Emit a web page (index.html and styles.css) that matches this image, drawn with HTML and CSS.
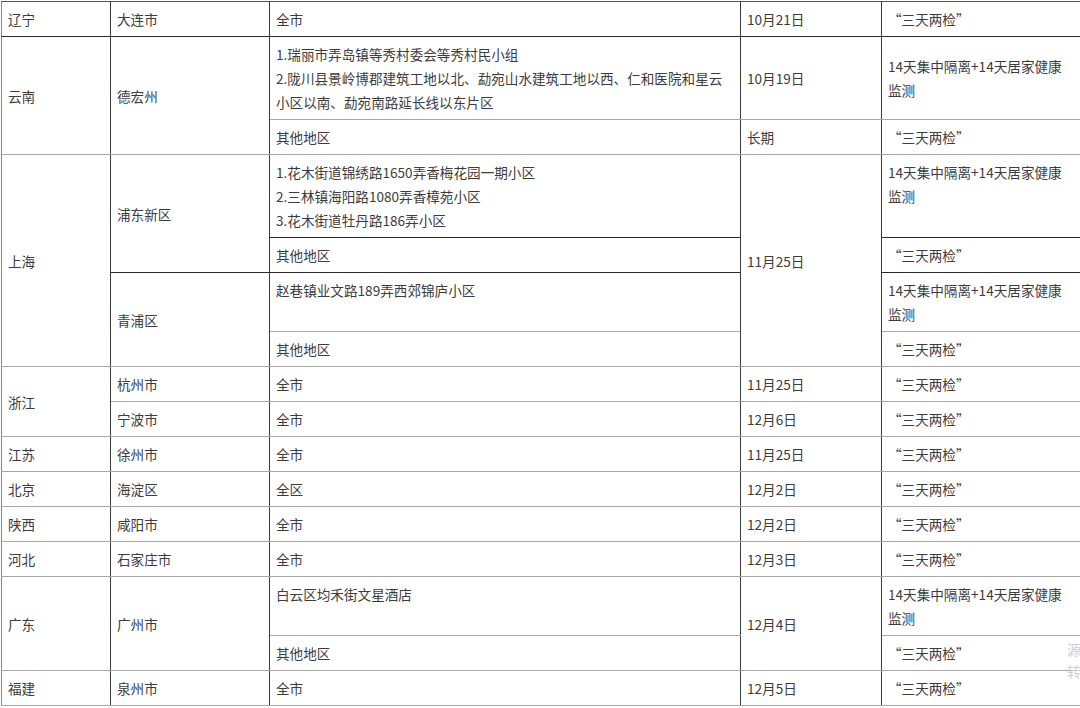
FILE: index.html
```html
<!DOCTYPE html>
<html lang="zh-CN">
<head>
<meta charset="utf-8">
<link rel="stylesheet" href="styles.css">
</head>
<body>
<table class="grid">
  <colgroup>
    <col class="c1"><col class="c2"><col class="c3"><col class="c4"><col class="c5">
  </colgroup>
  <tbody>
    <tr class="dark-b">
      <td>辽宁</td><td>大连市</td><td>全市</td><td>10月21日</td><td class="q">“三天两检”</td>
    </tr>
    <tr>
      <td rowspan="2">云南</td><td rowspan="2">德宏州</td>
      <td class="top">1.瑞丽市弄岛镇等秀村委会等秀村民小组<br>2.陇川县景岭博郡建筑工地以北、勐宛山水建筑工地以西、仁和医院和星云小区以南、勐宛南路延长线以东片区</td>
      <td>10月19日</td><td class="m">14天集中隔离+14天居家健康监测</td>
    </tr>
    <tr>
      <td>其他地区</td><td>长期</td><td class="q">“三天两检”</td>
    </tr>
    <tr>
      <td rowspan="4">上海</td><td rowspan="2" class="dark-b">浦东新区</td>
      <td class="top dark-b">1.花木街道锦绣路1650弄香梅花园一期小区<br>2.三林镇海阳路1080弄香樟苑小区<br>3.花木街道牡丹路186弄小区</td>
      <td rowspan="4">11月25日</td><td class="m top dark-b">14天集中隔离+14天居家健康监测</td>
    </tr>
    <tr class="dark-b">
      <td>其他地区</td><td class="q">“三天两检”</td>
    </tr>
    <tr>
      <td rowspan="2">青浦区</td>
      <td class="top">赵巷镇业文路189弄西郊锦庐小区</td>
      <td class="m top">14天集中隔离+14天居家健康监测</td>
    </tr>
    <tr>
      <td>其他地区</td><td class="q">“三天两检”</td>
    </tr>
    <tr>
      <td rowspan="2">浙江</td><td>杭州市</td><td>全市</td><td>11月25日</td><td class="q">“三天两检”</td>
    </tr>
    <tr>
      <td>宁波市</td><td>全市</td><td>12月6日</td><td class="q">“三天两检”</td>
    </tr>
    <tr>
      <td>江苏</td><td>徐州市</td><td>全市</td><td>11月25日</td><td class="q">“三天两检”</td>
    </tr>
    <tr>
      <td>北京</td><td>海淀区</td><td>全区</td><td>12月2日</td><td class="q">“三天两检”</td>
    </tr>
    <tr>
      <td>陕西</td><td>咸阳市</td><td>全市</td><td>12月2日</td><td class="q">“三天两检”</td>
    </tr>
    <tr>
      <td>河北</td><td>石家庄市</td><td>全市</td><td>12月3日</td><td class="q">“三天两检”</td>
    </tr>
    <tr>
      <td rowspan="2">广东</td><td rowspan="2">广州市</td>
      <td class="top">白云区均禾街文星酒店</td>
      <td rowspan="2">12月4日</td>
      <td class="m top">14天集中隔离+14天居家健康监测</td>
    </tr>
    <tr>
      <td>其他地区</td><td class="q">“三天两检”</td>
    </tr>
    <tr>
      <td>福建</td><td>泉州市</td><td>全市</td><td>12月5日</td><td class="q">“三天两检”</td>
    </tr>
  </tbody>
</table>
<div class="mark">源<br>转</div>
</body>
</html>
```

FILE: styles.css
```css
html, body {
  margin: 0;
  padding: 0;
  background: #ffffff;
  overflow: hidden;
}
body {
  position: relative;
  width: 1080px;
  height: 708px;
  font-family: "Noto Sans CJK SC", "Noto Sans", sans-serif;
  font-size: 13.6px;
  color: #3c3c3c;
}
.grid {
  border-collapse: collapse;
  table-layout: fixed;
  width: 1082px;
  margin: 1px 0 0 1px;
}
.c1 { width: 109px; }
.c2 { width: 159px; }
.c3 { width: 471px; }
.c4 { width: 141px; }
.c5 { width: 202px; }
.grid td {
  border-left: 1px solid #3a3a3a;
  border-right: 1px solid #3a3a3a;
  border-top: 1px solid #a8a8a8;
  border-bottom: 1px solid #a8a8a8;
  padding: 5px 6px;
  line-height: 24px;
  height: 24px;
  vertical-align: middle;
  text-align: left;
  word-break: break-all;
}
.grid td.m { padding-right: 18px; }
.grid td.q { padding-left: 6px; }
.grid tr:first-child td { border-top-color: #555; }
.grid td:first-child { border-left-color: #888; }
.grid td.top { vertical-align: top; }
.grid tr.dark-b td,
.grid td.dark-b { border-bottom-color: #2a2a2a; }
.mark {
  position: absolute;
  left: 1067px;
  top: 638px;
  font-size: 14px;
  line-height: 22px;
  color: #cfcfcf;
}
```
